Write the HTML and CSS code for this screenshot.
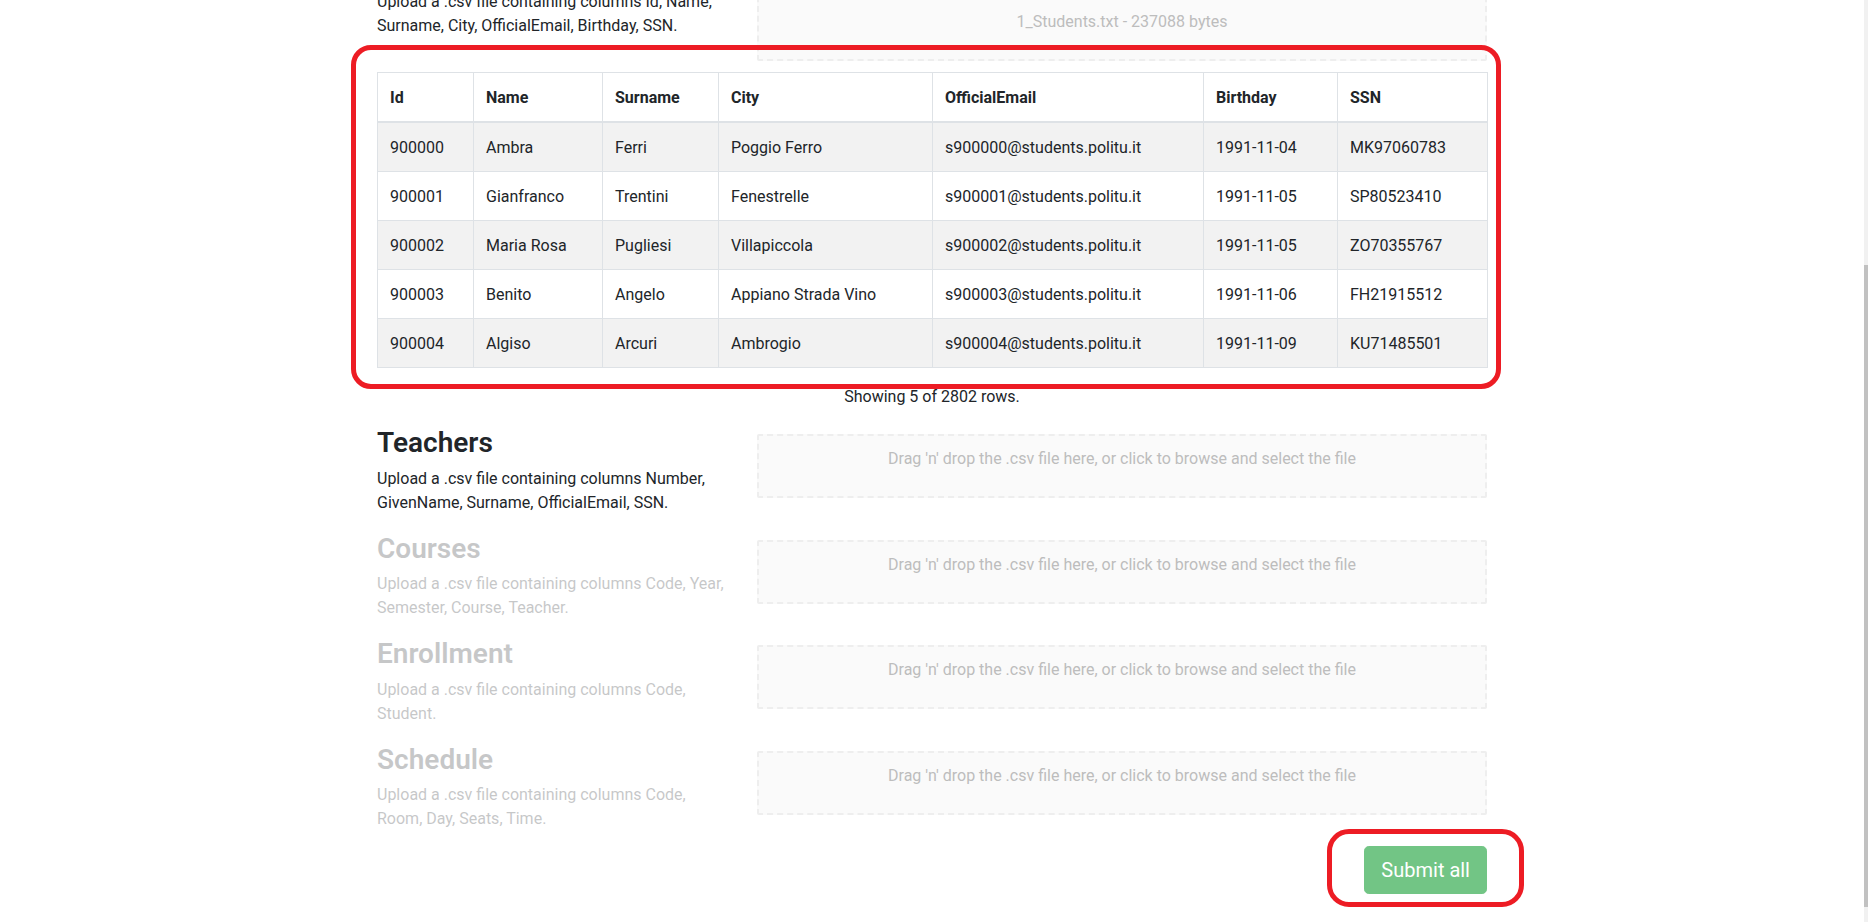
FILE: index.html
```html
<!DOCTYPE html>
<html lang="en">
<head>
<meta charset="utf-8">
<title>Upload data</title>
<link rel="stylesheet" href="styles.css">
</head>
<body>
<div class="screen">
  <main class="container">
    <section class="upload-row first">
      <div class="upload-info">
        <h3>Students</h3>
        <p>Upload a .csv file containing columns Id, Name,<br>Surname, City, OfficialEmail, Birthday, SSN.</p>
      </div>
      <div class="upload-drop">
        <div class="dropzone">
          <p>Drag 'n' drop the .csv file here, or click to browse and select the file</p>
          <p>1_Students.txt - 237088 bytes</p>
        </div>
      </div>
    </section>

    <table class="preview">
      <colgroup>
        <col class="c-id"><col class="c-name"><col class="c-surname"><col class="c-city"><col class="c-email"><col class="c-birth"><col class="c-ssn">
      </colgroup>
      <thead>
        <tr><th>Id</th><th>Name</th><th>Surname</th><th>City</th><th>OfficialEmail</th><th>Birthday</th><th>SSN</th></tr>
      </thead>
      <tbody>
        <tr><td>900000</td><td>Ambra</td><td>Ferri</td><td>Poggio Ferro</td><td>s900000@students.politu.it</td><td>1991-11-04</td><td>MK97060783</td></tr>
        <tr><td>900001</td><td>Gianfranco</td><td>Trentini</td><td>Fenestrelle</td><td>s900001@students.politu.it</td><td>1991-11-05</td><td>SP80523410</td></tr>
        <tr><td>900002</td><td>Maria Rosa</td><td>Pugliesi</td><td>Villapiccola</td><td>s900002@students.politu.it</td><td>1991-11-05</td><td>ZO70355767</td></tr>
        <tr><td>900003</td><td>Benito</td><td>Angelo</td><td>Appiano Strada Vino</td><td>s900003@students.politu.it</td><td>1991-11-06</td><td>FH21915512</td></tr>
        <tr><td>900004</td><td>Algiso</td><td>Arcuri</td><td>Ambrogio</td><td>s900004@students.politu.it</td><td>1991-11-09</td><td>KU71485501</td></tr>
      </tbody>
    </table>
    <p class="rows-note">Showing 5 of 2802 rows.</p>

    <section class="upload-row">
      <div class="upload-info">
        <h3>Teachers</h3>
        <p>Upload a .csv file containing columns Number,<br>GivenName, Surname, OfficialEmail, SSN.</p>
      </div>
      <div class="upload-drop">
        <div class="dropzone"><p>Drag 'n' drop the .csv file here, or click to browse and select the file</p></div>
      </div>
    </section>

    <section class="upload-row disabled">
      <div class="upload-info">
        <h3>Courses</h3>
        <p>Upload a .csv file containing columns Code, Year,<br>Semester, Course, Teacher.</p>
      </div>
      <div class="upload-drop">
        <div class="dropzone"><p>Drag 'n' drop the .csv file here, or click to browse and select the file</p></div>
      </div>
    </section>

    <section class="upload-row disabled">
      <div class="upload-info">
        <h3>Enrollment</h3>
        <p>Upload a .csv file containing columns Code,<br>Student.</p>
      </div>
      <div class="upload-drop">
        <div class="dropzone"><p>Drag 'n' drop the .csv file here, or click to browse and select the file</p></div>
      </div>
    </section>

    <section class="upload-row disabled">
      <div class="upload-info">
        <h3>Schedule</h3>
        <p>Upload a .csv file containing columns Code,<br>Room, Day, Seats, Time.</p>
      </div>
      <div class="upload-drop">
        <div class="dropzone"><p>Drag 'n' drop the .csv file here, or click to browse and select the file</p></div>
      </div>
    </section>

    <div class="actions">
      <button class="btn-submit" type="button" disabled>Submit all</button>
    </div>
  </main>

  <div class="mark mark-table"></div>
  <div class="mark mark-submit"></div>
  <div class="scrollbar"><div class="scroll-thumb"></div></div>
</div>
</body>
</html>
```
FILE: styles.css
```css
html, body {
  margin: 0;
  padding: 0;
  height: 922px;
  overflow: hidden;
  background: #fff;
}

body {
  font-family: Roboto, "Segoe UI", "Liberation Sans", sans-serif;
  font-size: 16px;
  line-height: 1.5;
  color: #212529;
}

.screen {
  position: relative;
  width: 1868px;
  height: 922px;
  overflow: hidden;
}

.container {
  width: 1110px;
  margin-left: 377px;
}

.upload-row {
  display: flex;
  gap: 30px;
  align-items: flex-start;
}

.upload-row.first {
  margin-top: -53px;
}

.upload-info {
  width: 350px;
  flex: none;
  white-space: nowrap;
}

.upload-info h3 {
  margin: 0 0 6px;
  padding-top: 2px;
  font-size: 28px;
  line-height: 1.2;
  font-weight: 600;
}

.upload-info p {
  margin: 0 0 15px;
  padding-top: 1px;
}

.upload-row.disabled .upload-info {
  opacity: 0.25;
}

.upload-drop {
  flex: 1;
  min-width: 0;
}

.dropzone {
  margin: 10px 0;
  padding: 11px 10px 9px;
  border: 2px dashed #eeeeee;
  border-radius: 2px;
  background: #fafafa;
  color: #bdbdbd;
  text-align: center;
}

.dropzone p {
  margin: 0 0 16px;
}

.preview {
  width: 100%;
  margin: 1px 0 16px;
  border-collapse: collapse;
  table-layout: fixed;
}

.c-id { width: 96px; }
.c-name { width: 129px; }
.c-surname { width: 116px; }
.c-city { width: 214px; }
.c-email { width: 271px; }
.c-birth { width: 134px; }
.c-ssn { width: 150px; }

.preview th,
.preview td {
  padding: 13px 12px 11px;
  border: 1px solid #dee2e6;
  text-align: left;
  vertical-align: top;
  white-space: nowrap;
}

.preview thead th {
  border-bottom: 2px solid #dee2e6;
  font-weight: 700;
  vertical-align: bottom;
}

.preview tbody tr:nth-child(odd) {
  background: #f2f2f2;
}

.rows-note {
  margin: 0 0 15px;
  padding-top: 1px;
  text-align: center;
}

.actions {
  display: flex;
  justify-content: flex-end;
}

.btn-submit {
  font-family: inherit;
  font-size: 20px;
  line-height: 1.5;
  padding: 8px 16px;
  color: #fff;
  background: #28a745;
  border: 1px solid #28a745;
  border-radius: 4.8px;
  opacity: 0.65;
}

.mark {
  position: absolute;
  box-sizing: border-box;
  border: 5px solid #ed1c24;
}

.mark-table {
  left: 351px;
  top: 45px;
  width: 1150px;
  height: 344px;
  border-radius: 20px;
}

.mark-submit {
  left: 1327px;
  top: 829px;
  width: 197px;
  height: 78px;
  border-radius: 22px;
}

.scrollbar {
  position: absolute;
  right: 0;
  top: 0;
  width: 4px;
  height: 922px;
  background: #f1f1f1;
}

.scroll-thumb {
  position: absolute;
  left: 0;
  top: 265px;
  width: 4px;
  height: 642px;
  background: #c1c1c1;
}
```
